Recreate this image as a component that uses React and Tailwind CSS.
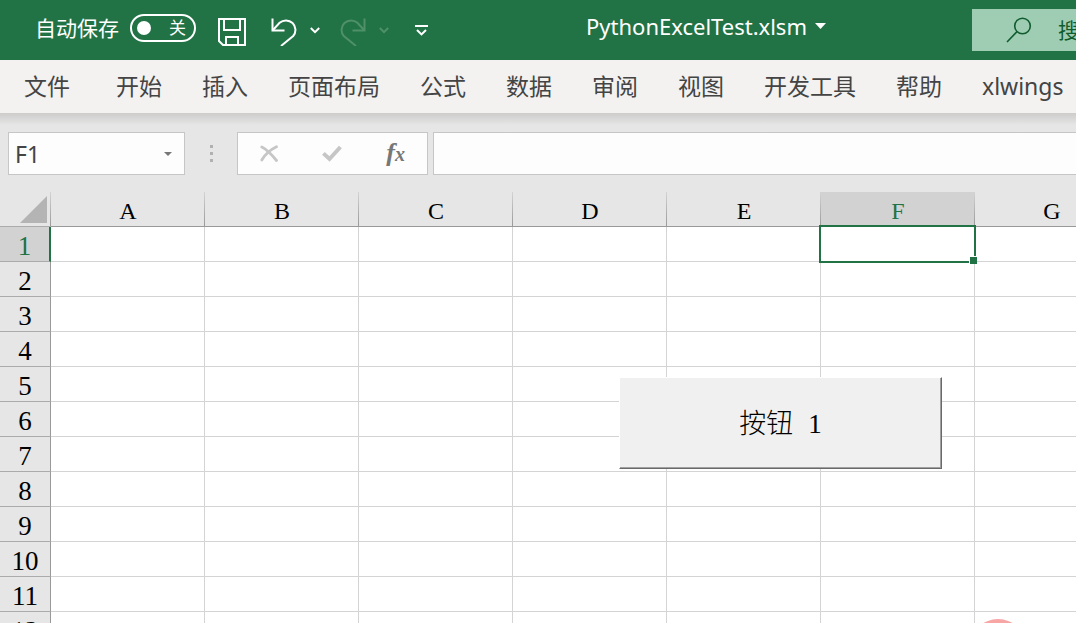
import React, { useState } from 'react';

const tabs = ['文件', '开始', '插入', '页面布局', '公式', '数据', '审阅', '视图', '开发工具', '帮助', 'xlwings'];
const columns = ['A', 'B', 'C', 'D', 'E', 'F', 'G'];
const rows = [1, 2, 3, 4, 5, 6, 7, 8, 9, 10, 11, 12];

function Chevron({ className }) {
  return (
    <svg viewBox="0 0 10 7" className={className} fill="none" stroke="currentColor" strokeWidth="2">
      <path d="M0.8 1L5 5.2L9.2 1" />
    </svg>
  );
}

function TitleBar() {
  const [autoSave, setAutoSave] = useState(false);

  return (
    <header className="flex h-[60px] shrink-0 items-center bg-[#217346] text-white">
      <div className="flex shrink-0 items-center pb-1 pl-[35px]">
        <span className="text-[21px] leading-7">自动保存</span>
        <button
          role="switch"
          aria-checked={autoSave}
          aria-label="自动保存"
          onClick={() => setAutoSave(!autoSave)}
          className="ml-[11px] flex h-7 w-[66px] items-center justify-between rounded-full border-2 border-white pl-[5px] pr-2"
        >
          <span className="size-[14px] rounded-full bg-white" />
          <span className="text-[17px] leading-6">{autoSave ? '开' : '关'}</span>
        </button>
        <button aria-label="保存" className="ml-[22px] mt-2">
          <svg viewBox="0 0 28 28" className="size-7" fill="none" stroke="currentColor" strokeWidth="2">
            <path d="M1 1H27V27H5L1 23Z" />
            <path d="M6 1V12H22V1" />
            <path d="M8 27V19H20V27" />
          </svg>
        </button>
        <button aria-label="撤消" className="ml-6 mt-2">
          <svg viewBox="0 0 28 28" className="size-7" fill="none" stroke="currentColor" strokeWidth="2">
            <path d="M2.5 0.5V12.5H14.5" />
            <path d="M2.5 12.5L9.6 4.8A9.5 9.5 0 0 1 23.2 18L11 28" />
          </svg>
        </button>
        <button aria-label="撤消选项" className="ml-3 mt-1">
          <Chevron className="h-[7px] w-[10px]" />
        </button>
        <button aria-label="恢复" className="ml-[19px] mt-2 text-[#4f9069]">
          <svg viewBox="0 0 28 28" className="size-7" fill="none" stroke="currentColor" strokeWidth="2">
            <path d="M25.5 0.5V12.5H13.5" />
            <path d="M25.5 12.5L18.4 4.8A9.5 9.5 0 0 0 4.8 18L17 28" />
          </svg>
        </button>
        <button aria-label="恢复选项" className="ml-3 mt-1 text-[#4f9069]">
          <Chevron className="h-[7px] w-[10px]" />
        </button>
        <button aria-label="自定义快速访问工具栏" className="ml-[26px] mt-1">
          <svg viewBox="0 0 13 11" className="h-[11px] w-[13px]" fill="none" stroke="currentColor" strokeWidth="2">
            <path d="M0 1H13" />
            <path d="M2 5L6.5 9.4L11 5" />
          </svg>
        </button>
      </div>
      <div className="flex flex-1 justify-center pb-2 pl-3">
        <button className="flex items-center gap-2 text-[22px] leading-8">
          PythonExcelTest.xlsm
          <svg viewBox="0 0 11 6" className="h-[6px] w-[11px]" fill="currentColor">
            <path d="M0 0H11L5.5 6Z" />
          </svg>
        </button>
      </div>
      <label className="flex h-[42px] w-[104px] shrink-0 items-center overflow-hidden bg-[#9fcdb3] pl-[34px] text-[#0f5c2f]">
        <svg viewBox="0 0 26 26" className="size-[26px] shrink-0" fill="none" stroke="currentColor" strokeWidth="1.6">
          <circle cx="16.5" cy="9" r="7.8" />
          <path d="M11 14.6L1 25" />
        </svg>
        <input
          type="search"
          aria-label="搜索"
          placeholder="搜索"
          className="ml-[26px] w-20 shrink-0 bg-transparent text-[21px] leading-7 outline-none placeholder:text-[#0f5c2f]"
        />
      </label>
    </header>
  );
}

function RibbonTabs() {
  return (
    <nav className="flex h-[53px] shrink-0 items-center gap-10 overflow-hidden bg-[#f3f2f1] pb-[2px] pl-6 text-[23px] leading-8 text-[#444444]">
      {tabs.map((tab) => (
        <button key={tab} className="shrink-0 whitespace-nowrap first:mr-[6px]">
          {tab}
        </button>
      ))}
    </nav>
  );
}

function FormulaBar() {
  return (
    <div className="flex shrink-0 bg-linear-to-b from-[#cdcccb] to-[#e6e6e6] to-[12px] pb-[17px] pl-2 pt-[19px]">
      <div className="flex h-[43px] w-[177px] shrink-0 items-center border border-[#c6c6c6] bg-[#fdfdfd] pr-3">
        <input
          aria-label="名称框"
          defaultValue="F1"
          className="min-w-0 flex-1 bg-transparent pl-[6px] text-[23px] leading-8 text-[#444444] outline-none"
        />
        <button aria-label="名称列表">
          <svg viewBox="0 0 8 4" className="h-1 w-2" fill="#777777">
            <path d="M0 0H8L4 4Z" />
          </svg>
        </button>
      </div>
      <div className="flex w-[52px] shrink-0 flex-col items-center justify-center gap-1">
        <span className="size-[3px] bg-[#b1b1b1]" />
        <span className="size-[3px] bg-[#b1b1b1]" />
        <span className="size-[3px] bg-[#b1b1b1]" />
      </div>
      <div className="flex h-[43px] w-[191px] shrink-0 items-center justify-around border border-[#c6c6c6] bg-[#fdfdfd]">
        <button aria-label="取消">
          <svg viewBox="0 0 18 17" className="h-[17px] w-[18px]" fill="none" stroke="#c6c6c6" strokeLinecap="round">
            <path d="M1.8 2C6 4 12 10 16.5 15.5" strokeWidth="2.8" />
            <path d="M16.5 1.8C11 4.5 5 9.5 1.8 15" strokeWidth="2.8" />
          </svg>
        </button>
        <button aria-label="输入">
          <svg viewBox="0 0 20 17" className="h-[17px] w-5" fill="none" stroke="#c6c6c6" strokeWidth="4">
            <path d="M1.4 8.4L7.5 14L18.4 2" />
          </svg>
        </button>
        <button
          aria-label="插入函数"
          className="font-['Liberation_Serif',serif] text-[26px] font-bold italic leading-8 text-[#777777]"
        >
          f<span className="text-[20px]">x</span>
        </button>
      </div>
      <input
        aria-label="编辑栏"
        className="ml-[5px] h-[43px] min-w-0 flex-1 border border-r-0 border-[#c6c6c6] bg-[#fdfdfd] px-2 text-[23px] outline-none"
      />
    </div>
  );
}

function Sheet() {
  return (
    <main className="relative flex-1 overflow-hidden bg-white">
      <table className="w-[1129px] table-fixed border-separate border-spacing-0 font-['Liberation_Serif',serif] text-[27px] leading-7">
        <thead>
          <tr className="h-[35px] bg-[#e6e6e6]">
            <th className="relative w-[51px] border-b border-[#ababab] p-0">
              <svg viewBox="0 0 27 27" className="ml-5 size-[27px]" fill="#b4b4b4">
                <path d="M27 0V27H0Z" />
              </svg>
              <span className="absolute bottom-0 right-0 h-full w-px bg-linear-to-b from-[#d4d4d4] to-[#999999]" />
            </th>
            {columns.map((col) => (
              <th
                key={col}
                className={
                  col === 'F'
                    ? 'relative border-b border-[#999999] bg-[#d2d2d2] p-0 pt-1 text-[24px] font-normal text-[#217346]'
                    : 'relative border-b border-[#999999] p-0 pt-1 text-[24px] font-normal text-black'
                }
              >
                {col}
                <span className="absolute bottom-0 right-0 h-full w-px bg-linear-to-b from-[#d4d4d4] to-[#999999]" />
              </th>
            ))}
          </tr>
        </thead>
        <tbody>
          {rows.map((row) => (
            <tr key={row} className="h-[35px]">
              <th
                className={
                  row === 1
                    ? 'border-b border-r-2 border-b-[#ababab] border-r-[#217346] bg-[#d2d2d2] p-0 pt-1 font-normal text-[#217346]'
                    : 'border-b border-r border-b-[#ababab] border-r-[#999999] bg-[#e6e6e6] p-0 pt-1 font-normal text-black'
                }
              >
                {row}
              </th>
              {columns.map((col) => (
                <td key={col} className="relative border-b border-r border-[#d4d4d4] p-0">
                  {col === 'F' && row === 1 && (
                    <div className="absolute -bottom-[2px] -left-[2px] -right-[2px] -top-[2px] z-10 border-2 border-[#217346]">
                      <span className="absolute -bottom-[3px] -right-[3px] size-2 border-l border-t border-white bg-[#217346]" />
                    </div>
                  )}
                </td>
              ))}
            </tr>
          ))}
        </tbody>
      </table>

      <button className="absolute left-[619px] top-[185px] h-[92px] w-[323px] border border-b-[#696969] border-l-white border-r-[#696969] border-t-white bg-[#f0f0f0] text-[27px] font-light leading-9 text-black shadow-[inset_-1px_-1px_0_#a0a0a0]">
        按钮 <span className="ml-2 font-['Liberation_Serif',serif] font-normal">1</span>
      </button>
      <span className="absolute left-[970px] top-[427px] size-14 rounded-full bg-[#f8a5a5]" />
    </main>
  );
}

export default function App() {
  return (
    <div className="flex h-screen flex-col overflow-hidden bg-[#e6e6e6] font-['Noto_Sans','Noto_Sans_CJK_SC',sans-serif]">
      <TitleBar />
      <RibbonTabs />
      <FormulaBar />
      <Sheet />
    </div>
  );
}
